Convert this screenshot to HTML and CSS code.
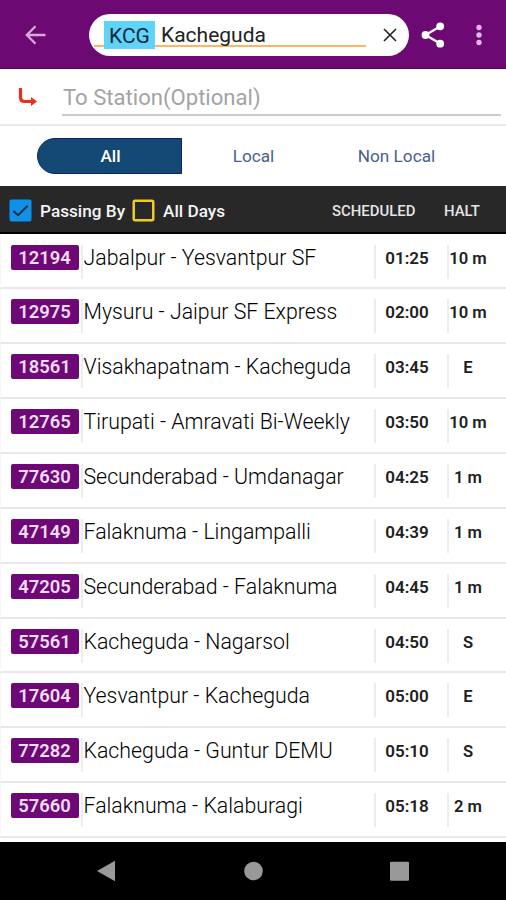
FILE: index.html
```html
<!DOCTYPE html>
<html lang="en">
<head>
<meta charset="utf-8">
<title>Kacheguda trains</title>
<link rel="stylesheet" href="styles.css">
</head>
<body>
<header class="topbar">
  <svg class="back" viewBox="0 0 22 22"><path d="M20.500 11H2M10.500 2.200L1.800 11l8.700 8.800"/></svg>
  <div class="search">
    <div class="field"><span class="code">KCG</span><span class="station">Kacheguda</span></div>
    <svg class="clear" viewBox="0 0 14 14"><path d="M1 1l12 12M13 1L1 13"/></svg>
  </div>
  <svg class="share" viewBox="0 0 24 26"><path d="M19.500 4.300L4.500 13l15 8.700"/><circle cx="19.200" cy="4.300" r="3.900"/><circle cx="4.500" cy="13" r="3.900"/><circle cx="19.200" cy="21.700" r="3.900"/></svg>
  <svg class="more" viewBox="0 0 6 22"><circle cx="3" cy="3.500" r="2.700"/><circle cx="3" cy="11" r="2.700"/><circle cx="3" cy="18.500" r="2.700"/></svg>
</header>
<section class="destination">
  <svg class="turn" viewBox="0 0 20 20"><path class="stem" d="M2.500 1v9.500q0 4 4 4H14"/><path class="tip" d="M13 10l6 4.500-6 4.500z"/></svg>
  <div class="to">To Station(Optional)</div>
</section>
<nav class="tabs"><span class="tab active">All</span><span class="tab">Local</span><span class="tab">Non Local</span></nav>
<section class="filters">
  <svg class="box" viewBox="0 0 24 24"><rect x=".5" y=".5" width="23" height="23" rx="2" fill="#0e91e8"/><path d="M4.500 12.500l5 4.500L19.500 7" fill="none" stroke="#202a35" stroke-width="2"/></svg>
  <span class="passing">Passing By</span>
  <svg class="box" viewBox="0 0 24 24"><rect x="1.800" y="1.800" width="20.400" height="20.400" rx="1.500" fill="none" stroke="#f0cd20" stroke-width="2.600"/></svg>
  <span class="days">All Days</span>
  <span class="scheduled">SCHEDULED</span>
  <span class="halthead">HALT</span>
</section>
<main class="trains">
  <div class="train"><b class="num">12194</b><span class="name">Jabalpur - Yesvantpur SF</span><span class="time">01:25</span><span class="halt">10 m</span></div>
  <div class="train"><b class="num">12975</b><span class="name">Mysuru - Jaipur SF Express</span><span class="time">02:00</span><span class="halt">10 m</span></div>
  <div class="train"><b class="num">18561</b><span class="name">Visakhapatnam - Kacheguda</span><span class="time">03:45</span><span class="halt">E</span></div>
  <div class="train"><b class="num">12765</b><span class="name">Tirupati - Amravati Bi-Weekly</span><span class="time">03:50</span><span class="halt">10 m</span></div>
  <div class="train"><b class="num">77630</b><span class="name">Secunderabad - Umdanagar</span><span class="time">04:25</span><span class="halt">1 m</span></div>
  <div class="train"><b class="num">47149</b><span class="name">Falaknuma - Lingampalli</span><span class="time">04:39</span><span class="halt">1 m</span></div>
  <div class="train"><b class="num">47205</b><span class="name">Secunderabad - Falaknuma</span><span class="time">04:45</span><span class="halt">1 m</span></div>
  <div class="train"><b class="num">57561</b><span class="name">Kacheguda - Nagarsol</span><span class="time">04:50</span><span class="halt">S</span></div>
  <div class="train"><b class="num">17604</b><span class="name">Yesvantpur - Kacheguda</span><span class="time">05:00</span><span class="halt">E</span></div>
  <div class="train"><b class="num">77282</b><span class="name">Kacheguda - Guntur DEMU</span><span class="time">05:10</span><span class="halt">S</span></div>
  <div class="train"><b class="num">57660</b><span class="name">Falaknuma - Kalaburagi</span><span class="time">05:18</span><span class="halt">2 m</span></div>
</main>
<footer class="sysnav">
  <svg viewBox="0 0 22 22"><path d="M1 11L19 .800v20.400z"/></svg>
  <svg viewBox="0 0 22 22"><circle cx="11.500" cy="11" r="9.300"/></svg>
  <svg viewBox="0 0 22 22"><rect x="2" y="1.800" width="19" height="19" rx="1"/></svg>
</footer>
</body>
</html>
```

FILE: styles.css
```css
* { box-sizing: border-box; }
body {
  margin: 0;
  width: 506px;
  height: 900px;
  display: flex;
  flex-direction: column;
  overflow: hidden;
  background: #fff;
  font-family: Roboto, "Liberation Sans", sans-serif;
  white-space: nowrap;
}
svg { display: block; flex: none; }

.topbar {
  height: 69px;
  flex: none;
  display: flex;
  align-items: center;
  padding: 1px 0 0 25px;
  background: #6d0973;
  border-bottom: 1px solid #4e0556;
}
.back { width: 22px; height: 22px; fill: none; stroke: #d7a9dc; stroke-width: 2.3; }
.search {
  width: 320px;
  height: 42px;
  margin-left: 42px;
  padding: 0 12px 0 5px;
  display: flex;
  align-items: center;
  justify-content: space-between;
  border-radius: 21px;
  background: #fff;
}
.field {
  width: 272px;
  height: 28px;
  display: flex;
  align-items: center;
  padding-left: 10px;
  background: linear-gradient(#fbb85a, #fbb85a) 0 24px / 100% 2px no-repeat;
  font-size: 21px;
  color: #222;
}
.code { width: 51px; height: 28px; line-height: 30px; text-align: center; background: #5fd3fa; color: #102a35; }
.station { margin-left: 6px; line-height: 30px; }
.clear { width: 14px; height: 14px; fill: none; stroke: #222; stroke-width: 1.6; }
.share { width: 24px; height: 26px; margin-left: 12px; fill: none; stroke: #fff; stroke-width: 2.3; }
.share circle { fill: #fff; stroke: none; }
.more { width: 6px; height: 22px; margin-left: 31px; fill: #e2b4e7; }

.destination {
  height: 57px;
  flex: none;
  display: flex;
  align-items: center;
  padding-left: 18px;
  border-bottom: 2px solid #e9e9e9;
}
.turn { width: 20px; height: 20px; }
.stem { fill: none; stroke: #e8301c; stroke-width: 3.2; }
.tip { fill: #e8301c; }
.to {
  width: 439px;
  height: 37px;
  margin: 2px 0 0 24px;
  padding-left: 1px;
  line-height: 36px;
  border-bottom: 2px solid #c9cbca;
  font-size: 22.1px;
  color: #a3a3a3;
}

.tabs { height: 60px; flex: none; display: flex; align-items: center; padding-left: 37px; }
.tab { width: 143px; height: 36px; line-height: 37px; text-align: center; font-size: 17.2px; color: #4a5f8b; }
.tab.active { width: 145px; border: 1px solid #0a2466; border-radius: 18px 0 0 18px; line-height: 35px; padding-left: 2px; background: #144875; color: #fff; font-weight: 500; }

.filters {
  height: 48px;
  flex: none;
  display: flex;
  align-items: center;
  padding: 3px 0 0 9px;
  background: #282828;
  border-bottom: 2px solid #000;
  color: #f4f4f4;
  font-size: 17.2px;
  font-weight: 500;
}
.box { width: 23px; height: 23px; }
.passing { width: 92px; margin-left: 8px; }
.filters span { padding-top: 1px; }
.days { width: 169px; margin-left: 8px; }
.scheduled, .halthead { font-size: 14.900px; color: #e4e4e4; }
.scheduled { width: 112px; }

.trains { height: 608px; flex: none; overflow: hidden; padding-top: .5px; }
.train {
  height: 54.86px;
  display: flex;
  align-items: flex-start;
  padding: 10.100px 0 0 9.500px;
  border-bottom: 2px solid #e8e8e8;
  border-left: 1px solid #f8f8f8;
}
.num {
  width: 68px;
  height: 25px;
  border-radius: 2px;
  line-height: 26px;
  text-align: center;
  background: #6e0876;
  color: #f3ddf5;
  font-size: 18.400px;
  font-weight: 600;
}
.name, .time, .halt { height: 34px; line-height: 26px; border-left: 2px solid #ededed; color: #202020; }
.name { width: 293px; margin-left: 2px; padding-left: 1px; font-size: 21.300px; font-weight: 300; color: #000; }
.time, .halt { font-size: 17px; font-weight: 600; text-align: center; line-height: 27px; }
.time { width: 73px; padding-right: 8px; }
.halt { width: 41px; font-size: 16.600px; }

.sysnav { height: 58px; flex: none; display: flex; align-items: center; gap: 124px; padding-left: 96px; background: #000; }
.sysnav svg { width: 22px; height: 22px; fill: #999; }
```
